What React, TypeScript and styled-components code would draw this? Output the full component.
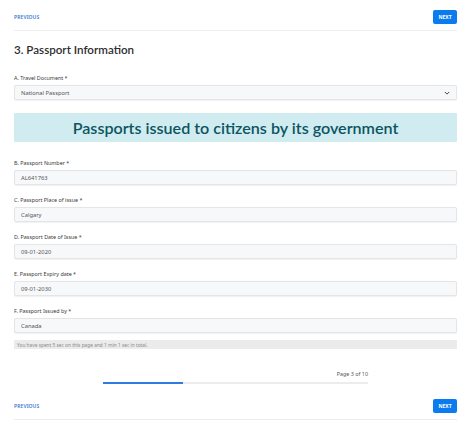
import React from 'react';
import styled, { createGlobalStyle } from 'styled-components';

const GlobalStyle = createGlobalStyle`
  html, body {
    margin: 0;
    padding: 0;
    background: #ffffff;
  }
  body {
    font-family: "Noto Sans", "Open Sans", Arial, sans-serif;
    color: #333333;
  }
`;

const Page = styled.div`
  width: 474px;
  height: 434px;
  padding: 0 17px 0 14px;
  box-sizing: border-box;
  display: flex;
  flex-direction: column;
`;

const NavBar = styled.div<{ bottom?: boolean }>`
  display: flex;
  align-items: center;
  justify-content: space-between;
  padding: 10px 0 6px;
  margin-top: ${({ bottom }) => (bottom ? '5px' : '0')};
  border-bottom: 1px solid #ededed;
`;

const PrevLink = styled.span`
  font-size: 5px;
  font-weight: 600;
  color: #3a7bd5;
  letter-spacing: 0.1px;
`;

const NextButton = styled.button`
  width: 24px;
  height: 14px;
  padding: 0;
  border: none;
  border-radius: 2px;
  background: #0b7bf0;
  color: #ffffff;
  font-family: inherit;
  font-size: 5px;
  font-weight: 700;
`;

const Title = styled.h3`
  margin: 11px 0 17px;
  font-family: Lato, "Noto Sans", sans-serif;
  font-size: 11.6px;
  line-height: 16px;
  font-weight: 600;
  color: #2e2e2e;
`;

const Field = styled.div`
  display: flex;
  flex-direction: column;
  margin-bottom: 12px;
`;

const Label = styled.label`
  font-size: 5.4px;
  line-height: 7px;
  height: 7px;
  margin-bottom: 3px;
  color: #3a3a3a;
`;

const Input = styled.div`
  height: 15px;
  box-sizing: border-box;
  display: flex;
  align-items: center;
  justify-content: space-between;
  padding: 0 6px;
  border: 1px solid #e3e5e8;
  border-radius: 2px;
  background: #f7f8fa;
  box-shadow: 0 0.5px 1px rgba(0, 0, 0, 0.06);
  font-size: 5.8px;
  color: #555555;
`;

const Chevron = styled.svg`
  width: 6px;
  height: 6px;
  color: #333333;
`;

const InfoBanner = styled.div`
  height: 29px;
  margin: 1px 0 18px;
  display: flex;
  align-items: center;
  justify-content: center;
  background: #d1ecf1;
  border-radius: 1px;
  color: #0c5460;
  font-family: Lato, "Noto Sans", sans-serif;
  font-size: 16.1px;
  font-weight: 600;
`;

const Timer = styled.div`
  height: 9px;
  margin-top: -5px;
  padding: 0 3px;
  display: flex;
  align-items: center;
  background: #ebebeb;
  font-size: 4.8px;
  color: #8a8a8a;
`;

const Progress = styled.div`
  width: 265px;
  margin: 22px auto 0;
  display: flex;
  flex-direction: column;
  align-items: flex-end;
`;

const PageCount = styled.span`
  font-size: 5.4px;
  line-height: 7px;
  color: #555555;
  margin-bottom: 4px;
`;

const Track = styled.div`
  width: 100%;
  height: 2px;
  background: #ececec;
`;

const Fill = styled.div`
  height: 100%;
  background: #2f7be0;
`;

const fields = [
  { label: 'B. Passport Number *', value: 'AL641763' },
  { label: 'C. Passport Place of issue *', value: 'Calgary' },
  { label: 'D. Passport Date of Issue *', value: '09-01-2020' },
  { label: 'E. Passport Expiry date *', value: '09-01-2030' },
  { label: 'F. Passport Issued by *', value: 'Canada' },
];

const page = 3;
const total = 10;

const Nav: React.FC<{ bottom?: boolean }> = ({ bottom }) => (
  <NavBar bottom={bottom}>
    <PrevLink>PREVIOUS</PrevLink>
    <NextButton>NEXT</NextButton>
  </NavBar>
);

const App: React.FC = () => (
  <>
    <GlobalStyle />
    <Page>
      <Nav />
      <Title>3. Passport Information</Title>

      <Field>
        <Label>A. Travel Document *</Label>
        <Input>
          National Passport
          <Chevron viewBox="0 0 16 16" fill="none" stroke="currentColor" strokeWidth="2.4" strokeLinecap="round" strokeLinejoin="round">
            <polyline points="3 6 8 11 13 6" />
          </Chevron>
        </Input>
      </Field>

      <InfoBanner>Passports issued to citizens by its government</InfoBanner>

      {fields.map((f) => (
        <Field key={f.label}>
          <Label>{f.label}</Label>
          <Input>{f.value}</Input>
        </Field>
      ))}

      <Timer>You have spent 5 sec on this page and 1 min 1 sec in total.</Timer>

      <Progress>
        <PageCount>Page {page} of {total}</PageCount>
        <Track>
          <Fill style={{ width: `${(page / total) * 100}%` }} />
        </Track>
      </Progress>

      <Nav bottom />
    </Page>
  </>
);

export default App;
